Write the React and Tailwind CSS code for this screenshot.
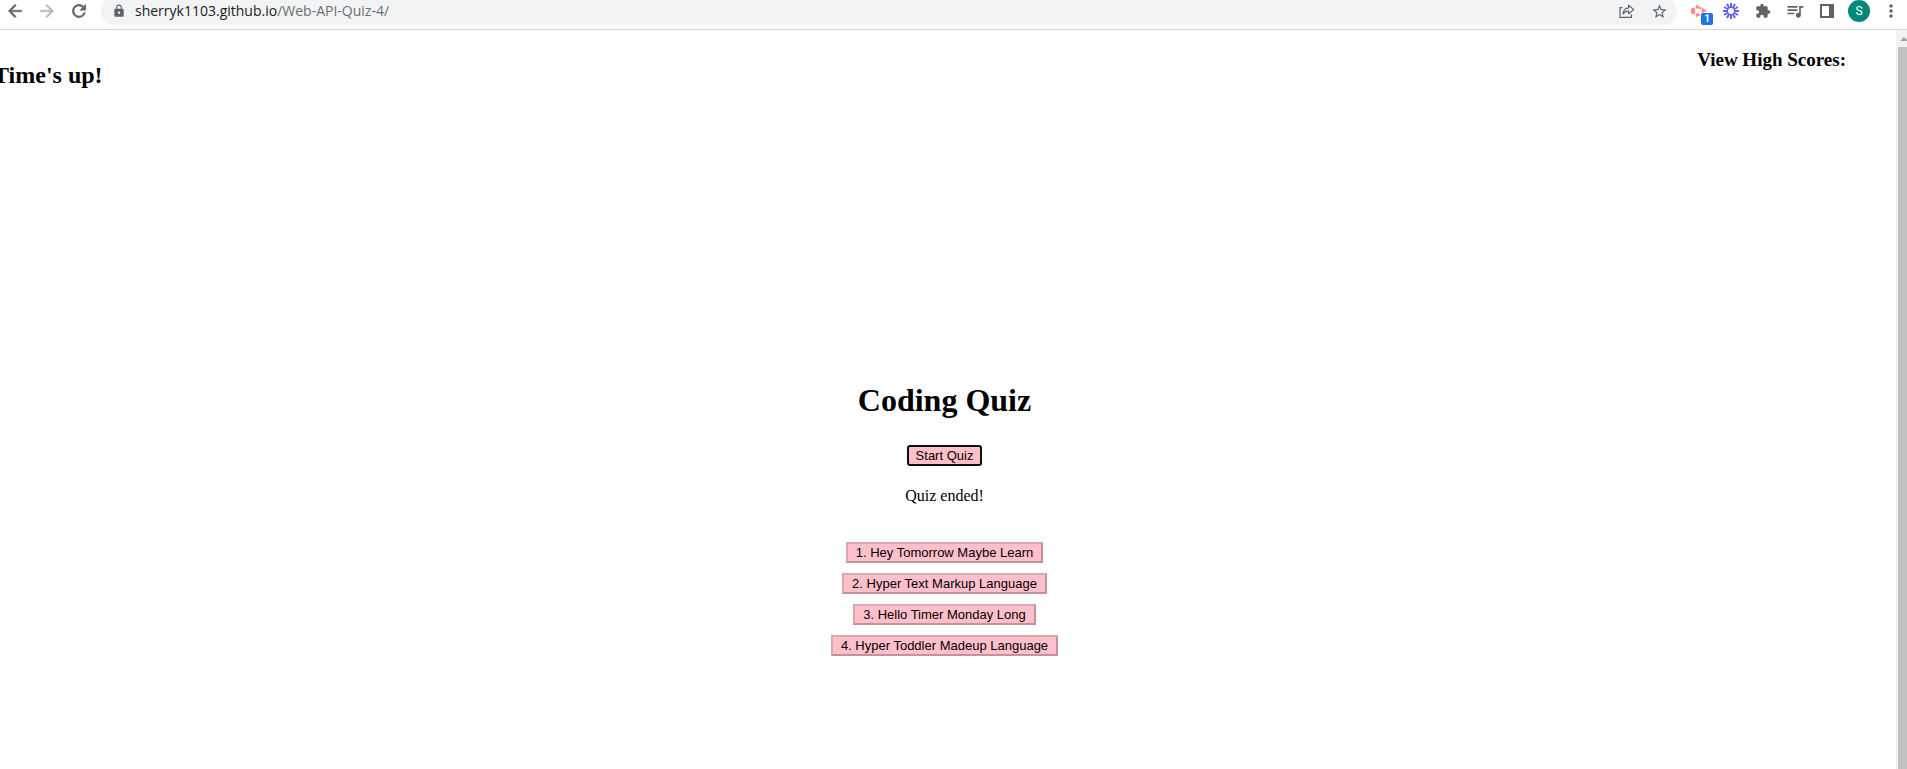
import React from "react";
import {
  MdLock,
  MdStarBorder,
  MdExtension,
  MdQueueMusic,
  MdMoreVert,
} from "react-icons/md";

const answers = [
  "1. Hey Tomorrow Maybe Learn",
  "2. Hyper Text Markup Language",
  "3. Hello Timer Monday Long",
  "4. Hyper Toddler Madeup Language",
];

const spokes = [0, 30, 60, 90, 120, 150, 180, 210, 240, 270, 300, 330];

const navIcons = {
  back: "M20 11H7.83l5.59-5.59L12 4l-8 8 8 8 1.41-1.41L7.83 13H20v-2z",
  forward: "M12 4l-1.41 1.41L16.17 11H4v2h12.17l-5.58 5.59L12 20l8-8z",
  reload:
    "M17.65 6.35A7.958 7.958 0 0 0 12 4a8 8 0 1 0 7.73 10h-2.08A5.99 5.99 0 0 1 12 18a6 6 0 1 1 4.22-10.22L13 11h7V4l-2.35 2.35z",
};

function NavIcon({ path }) {
  return (
    <svg width="20" height="20" viewBox="0 0 24 24" fill="currentColor" stroke="currentColor" strokeWidth="0.6">
      <path d={path} />
    </svg>
  );
}

function ShareIcon() {
  return (
    <svg width="16" height="16" viewBox="0 0 16 16" fill="none" stroke="#5f6368" strokeWidth="1.2">
      <path d="M3.5 4.6H1V14.4H12.5V11.5" />
      <path d="M4 11C4.4 7.4 6.3 5.2 9.6 4.9V2.2L14.8 6.6L9.6 10.8V8.2C7 8.2 5.3 9 4 11Z" strokeLinejoin="round" />
    </svg>
  );
}

function CameraIcon() {
  return (
    <svg width="16" height="14" viewBox="0 0 16 14">
      <path d="M0 4.5L4 3.6V10.4L0 9.6Z" fill="#ff8a8a" />
      <path d="M4.8 0.8L10.6 3.4L9.8 5L6.6 4.4H4.8ZM4.8 13.2L9 11.4V9.6H4.8Z" fill="#ff8a8a" />
      <path d="M10.6 3.4L16 7L10.6 9Z" fill="#ff8a8a" />
    </svg>
  );
}

function BurstIcon() {
  return (
    <svg width="16" height="16" viewBox="-8 -8 16 16" stroke="#625df5" strokeWidth="2">
      {spokes.map((a) => (
        <line key={a} x1="0" y1="-3" x2="0" y2="-8" transform={`rotate(${a})`} />
      ))}
    </svg>
  );
}

function SidePanelIcon() {
  return (
    <svg width="14" height="14" viewBox="0 0 14 14">
      <rect x="1" y="1" width="12" height="12" fill="none" stroke="#5f6368" strokeWidth="2" />
      <rect x="9" y="1" width="4" height="12" fill="#5f6368" />
    </svg>
  );
}

function ToolButton({ label, children }) {
  return (
    <button aria-label={label} className="relative flex h-7 w-8 items-center justify-center text-[#5f6368]">
      {children}
    </button>
  );
}

function Toolbar() {
  return (
    <header className="flex h-[30px] shrink-0 items-end overflow-hidden border-b border-[#d5d7da] bg-white pb-1 text-[#5f6368]">
      <nav className="flex h-7 items-center gap-3 px-[5px]">
        <button aria-label="Back"><NavIcon path={navIcons.back} /></button>
        <button aria-label="Forward" className="text-[#bababa]"><NavIcon path={navIcons.forward} /></button>
        <button aria-label="Reload"><NavIcon path={navIcons.reload} /></button>
      </nav>
      <div className="mr-1.5 ml-[7px] flex h-7 grow items-center rounded-full bg-[#f1f3f4] pr-0.5 pl-[11px]">
        <MdLock size={14} />
        <a
          href="#"
          className="ml-[9px] grow font-['Open_Sans',sans-serif] text-sm leading-5 text-[#202124]"
        >
          sherryk1103.github.io<span className="text-[#6b6f74]">/Web-API-Quiz-4/</span>
        </a>
        <ToolButton label="Share"><ShareIcon /></ToolButton>
        <ToolButton label="Bookmark"><MdStarBorder size={17} /></ToolButton>
      </div>
      <div className="flex">
        <ToolButton label="Recorder">
          <CameraIcon />
          <span className="absolute right-0.5 bottom-0 flex h-3 w-3 items-center justify-center rounded-xs bg-[#1a73e8] font-['Roboto',sans-serif] text-[10px] leading-3 font-bold text-white">
            1
          </span>
        </ToolButton>
        <ToolButton label="Loom"><BurstIcon /></ToolButton>
        <ToolButton label="Extensions"><MdExtension size={16} /></ToolButton>
        <ToolButton label="Media"><MdQueueMusic size={20} /></ToolButton>
        <ToolButton label="Side panel"><SidePanelIcon /></ToolButton>
        <ToolButton label="Profile">
          <span className="flex h-[22px] w-[22px] items-center justify-center rounded-full bg-[#00897b] font-['Roboto',sans-serif] text-xs text-white">
            S
          </span>
        </ToolButton>
        <ToolButton label="Menu"><MdMoreVert size={20} /></ToolButton>
      </div>
    </header>
  );
}

function Scrollbar() {
  return (
    <div aria-hidden="true" className="flex w-[11px] shrink-0 flex-col bg-[#f1f1f1] pl-0.5">
      <div className="flex h-[17px] shrink-0 items-center justify-end">
        <svg width="7" height="4" viewBox="0 0 7 4">
          <path d="M0 4L4 0L7 3V4Z" fill="#a3a3a3" />
        </svg>
      </div>
      <div className="grow bg-[#c1c1c1]" />
    </div>
  );
}

export default function App() {
  return (
    <div className="flex min-h-screen flex-col overflow-hidden bg-white">
      <Toolbar />
      <div className="flex grow">
        <main className="-ml-[7px] grow font-['Liberation_Serif',serif] text-black">
          <div className="flex items-start justify-between pr-[50px]">
            <h2 className="mt-[31px] text-2xl leading-7 font-bold">Time's up!</h2>
            <h3 className="mt-5 text-[19px] leading-5 font-bold">View High Scores:</h3>
          </div>
          <section className="mt-[293px] flex flex-col items-center">
            <h1 className="text-[32px] leading-9 font-bold">Coding Quiz</h1>
            <button className="mt-[27px] h-[21px] rounded-[3px] border-2 border-[#101010] bg-[#ffc0cb] px-[7px] font-['Liberation_Sans',sans-serif] text-[13px] leading-4">
              Start Quiz
            </button>
            <p className="mt-5 text-base leading-5">Quiz ended!</p>
            <ul className="mt-9 flex flex-col items-center gap-2.5">
              {answers.map((answer) => (
                <li key={answer} className="flex">
                  <button className="h-[21px] border-2 border-t-[#d9a8b1] border-r-[#c4929b] border-b-[#c4929b] border-l-[#d9a8b1] bg-[#ffc0cb] px-2 font-['Liberation_Sans',sans-serif] text-[13px] leading-4">
                    {answer}
                  </button>
                </li>
              ))}
            </ul>
          </section>
        </main>
        <Scrollbar />
      </div>
    </div>
  );
}
